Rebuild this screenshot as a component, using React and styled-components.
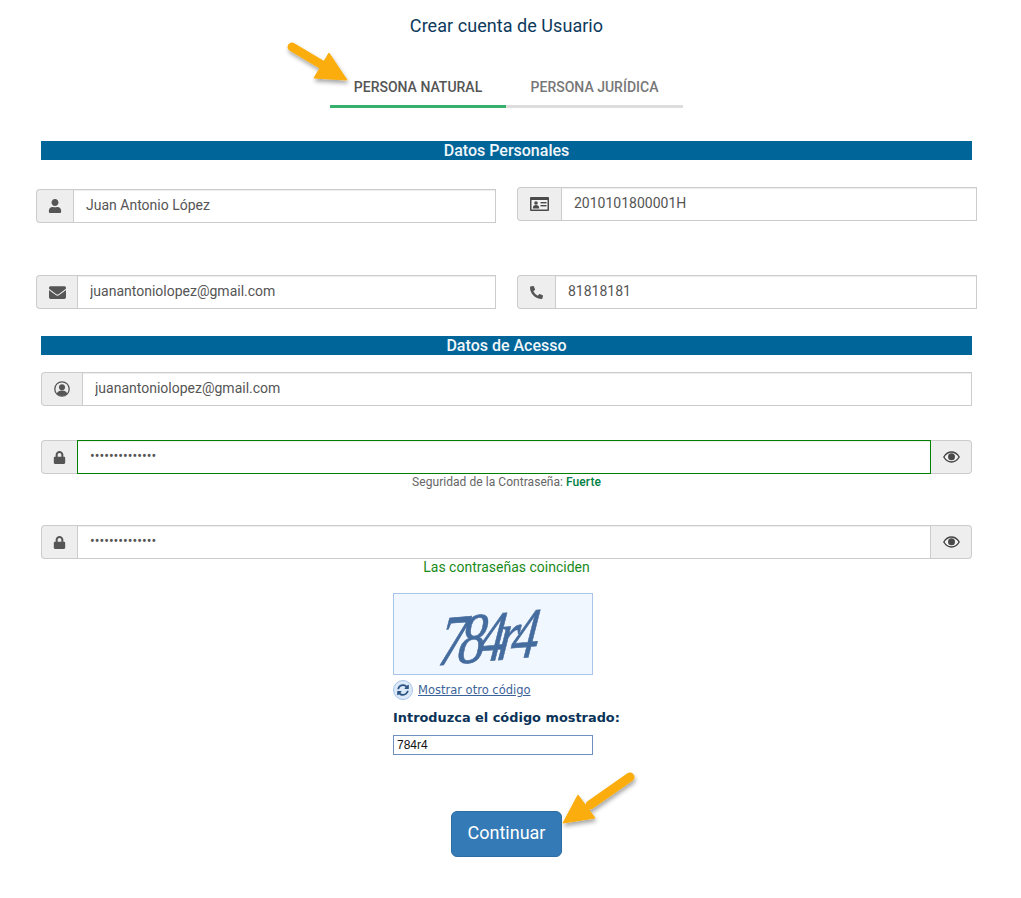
import styled, { createGlobalStyle } from "styled-components";
import { FaUser, FaEnvelope, FaPhoneAlt, FaLock, FaSyncAlt } from "react-icons/fa";

const GlobalStyle = createGlobalStyle`
  body {
    margin: 0;
    background: #fff;
    font-family: Roboto, "Liberation Sans", sans-serif;
  }
`;

const Page = styled.div`
  position: relative;
  width: 1021px;
  height: 898px;
  overflow: hidden;
`;

const Form = styled.form`
  display: flex;
  flex-direction: column;
  width: 931px;
  margin-left: 41px;
`;

const Title = styled.h1`
  margin: 14px 0 0;
  font-size: 18px;
  font-weight: 400;
  line-height: 24px;
  letter-spacing: 0.05px;
  text-align: center;
  color: #0d3a5c;
`;

const Tabs = styled.div`
  display: flex;
  align-self: center;
  margin-top: 28px;
`;

const Tab = styled.div`
  width: ${(p) => p.$width}px;
  height: 42px;
  box-sizing: border-box;
  padding-top: 13px;
  border-bottom: 3px solid ${(p) => (p.$active ? "#37b06b" : "#dddddd")};
  font-size: 14px;
  font-weight: 500;
  line-height: 16px;
  text-align: center;
  color: ${(p) => (p.$active ? "#555555" : "#777777")};
`;

const SectionBar = styled.h2`
  margin: ${(p) => p.$top}px 0 0;
  height: 19px;
  background: #006699;
  color: #f2f6f9;
  font-size: 16px;
  font-weight: 500;
  line-height: 20px;
  text-align: center;
`;

const Row = styled.div`
  display: grid;
  grid-template-columns: 460px 460px;
  column-gap: 21px;
  align-items: start;
  margin: ${(p) => p.$top}px -5px 0;
`;

const Field = styled.div`
  display: flex;
  height: 34px;
  margin-top: ${(p) => p.$top || 0}px;
`;

const Addon = styled.span`
  flex: none;
  display: flex;
  align-items: center;
  justify-content: center;
  box-sizing: border-box;
  width: ${(p) => p.$width}px;
  background: #eeeeee;
  border: 1px solid #cccccc;
  color: #555555;
  font-size: ${(p) => p.$size || 14}px;
  border-radius: ${(p) => (p.$right ? "0 4px 4px 0" : "4px 0 0 4px")};
  ${(p) => (p.$right ? "border-left: 0;" : "border-right: 0;")}
`;

const Input = styled.input`
  flex: 1;
  min-width: 0;
  box-sizing: border-box;
  height: 34px;
  padding: 0 12px 2px;
  background: #fff;
  border: 1px solid ${(p) => (p.$valid ? "#008000" : "#cccccc")};
  border-radius: 0;
  box-shadow: inset 0 1px 1px rgba(0, 0, 0, 0.075);
  color: #555555;
  font-family: Roboto, "Liberation Sans", sans-serif;
  font-size: 14px;
  outline: none;
`;

const Hint = styled.div`
  height: 16px;
  font-size: 12px;
  line-height: 16px;
  letter-spacing: 0.05px;
  text-align: center;
  color: #666666;
`;

const Strong = styled.span`
  font-weight: 500;
  color: #008044;
`;

const Match = styled.div`
  height: 16px;
  font-size: 14px;
  line-height: 16px;
  text-align: center;
  color: #1a8a1a;
`;

const CaptchaBlock = styled.div`
  align-self: center;
  width: 227px;
  margin-top: 18px;
`;

const CaptchaImage = styled.div`
  display: flex;
  align-items: center;
  justify-content: center;
  box-sizing: border-box;
  width: 200px;
  height: 82px;
  background: #f1f7fe;
  border: 1px solid #a9c5ea;
`;

const CaptchaText = styled.span`
  font-family: "Liberation Serif", serif;
  font-style: italic;
  font-size: 64px;
  line-height: 64px;
  letter-spacing: -9px;
  color: #456c9e;
  -webkit-text-stroke: 0.6px #456c9e;
  transform: translate(-7px, 4px) rotate(-5deg) skewX(-12deg) scale(0.86, 1.1);
`;

const Refresh = styled.div`
  display: flex;
  align-items: center;
  gap: 5px;
  height: 20px;
  margin-top: 5px;
`;

const RefreshIcon = styled.span`
  display: flex;
  align-items: center;
  justify-content: center;
  width: 20px;
  height: 20px;
  box-sizing: border-box;
  border: 1px solid #a9c5ea;
  border-radius: 50%;
  background: #dbe9f8;
  color: #2c5584;
  font-size: 12px;
`;

const RefreshLink = styled.a`
  font-family: "DejaVu Sans", sans-serif;
  font-size: 11.5px;
  color: #3b6399;
  text-decoration: underline;
`;

const CaptchaLabel = styled.label`
  display: block;
  margin-top: 9px;
  font-family: "DejaVu Sans", sans-serif;
  font-size: 12.9px;
  font-weight: 700;
  line-height: 17px;
  white-space: nowrap;
  color: #0b3358;
`;

const CaptchaInput = styled.input`
  display: block;
  box-sizing: border-box;
  width: 200px;
  height: 20px;
  margin-top: 9px;
  padding: 0 3px;
  border: 1px solid #6f8fc0;
  background: #fff;
  color: #111111;
  font-family: "Liberation Sans", sans-serif;
  font-size: 12px;
  outline: none;
`;

const Submit = styled.button`
  align-self: center;
  width: 111px;
  height: 46px;
  margin-top: 56px;
  padding: 0 0 3px;
  background: #337ab7;
  border: 1px solid #2e6da4;
  border-radius: 6px;
  color: #fff;
  font-family: Roboto, "Liberation Sans", sans-serif;
  font-size: 18px;
`;

const ArrowSvg = styled.svg`
  position: absolute;
  left: ${(p) => p.$left}px;
  top: ${(p) => p.$top}px;
  overflow: visible;
`;

// id card: dark frame with a light panel, a bust and two text lines
const IdCardIcon = () => (
  <svg width="19" height="14" viewBox="0 0 19 14">
    <rect width="19" height="14" rx="1" fill="#4a4a4a" />
    <rect x="1.5" y="3" width="16" height="9.5" fill="#f2f2f2" />
    <circle cx="6" cy="6" r="1.8" fill="#4a4a4a" />
    <path d="M2.8 11.5c0-2.4 1.3-3.4 3.2-3.4s3.2 1 3.2 3.4z" fill="#4a4a4a" />
    <rect x="10.5" y="5" width="6" height="1.4" fill="#4a4a4a" />
    <rect x="10.5" y="8" width="6" height="1.4" fill="#4a4a4a" />
  </svg>
);

const UserRingIcon = () => (
  <svg width="16" height="16" viewBox="0 0 16 16">
    <defs>
      <clipPath id="ring">
        <circle cx="8" cy="8" r="7" />
      </clipPath>
    </defs>
    <circle cx="8" cy="8" r="7.2" fill="none" stroke="#555" strokeWidth="1.3" />
    <g clipPath="url(#ring)" fill="#555">
      <circle cx="8" cy="6.2" r="3" />
      <ellipse cx="8" cy="14" rx="5.6" ry="4.6" />
    </g>
  </svg>
);

const EyeIcon = () => (
  <svg width="17" height="12" viewBox="0 0 17 12">
    <path
      d="M.8 6C2.7 2.9 5.4 1 8.5 1s5.800 1.900 7.700 5c-1.900 3.100-4.600 5-7.700 5S2.700 9.100.8 6z"
      fill="#f4f4f4"
      stroke="#444"
      strokeWidth="1.4"
    />
    <circle cx="8.500" cy="5.800" r="3.500" fill="#4a4a4a" />
  </svg>
);

// callout arrow, tail on x1/y1 and head drawn as a polygon
const Arrow = ({ left, top, width, height, line, head }) => (
  <ArrowSvg $left={left} $top={top} width={width} height={height}>
    <defs>
      <filter id={`shade${left}`} x="-20%" y="-20%" width="140%" height="140%">
        <feDropShadow dx="1" dy="3" stdDeviation="2" floodColor="#000" floodOpacity="0.35" />
      </filter>
    </defs>
    <g filter={`url(#shade${left})`} fill="#fbad0d" stroke="#fbad0d">
      <line {...line} strokeWidth="9" strokeLinecap="round" />
      <polygon points={head} strokeWidth="1" strokeLinejoin="round" />
    </g>
  </ArrowSvg>
);

export default function App() {
  return (
    <Page>
      <GlobalStyle />
      <Form onSubmit={(e) => e.preventDefault()}>
        <Title>Crear cuenta de Usuario</Title>
        <Tabs>
          <Tab $width={176} $active>PERSONA NATURAL</Tab>
          <Tab $width={177}>PERSONA JURÍDICA</Tab>
        </Tabs>

        <SectionBar $top={33}>Datos Personales</SectionBar>
        <Row $top={27}>
          <Field $top={2}>
            <Addon $width={37}><FaUser /></Addon>
            <Input readOnly value="Juan Antonio López" />
          </Field>
          <Field>
            <Addon $width={44}><IdCardIcon /></Addon>
            <Input readOnly value="2010101800001H" />
          </Field>
        </Row>
        <Row $top={52}>
          <Field>
            <Addon $width={41} $size={17}><FaEnvelope /></Addon>
            <Input readOnly value="juanantoniolopez@gmail.com" />
          </Field>
          <Field>
            <Addon $width={38} $size={13}><FaPhoneAlt /></Addon>
            <Input readOnly value="81818181" />
          </Field>
        </Row>

        <SectionBar $top={27}>Datos de Acesso</SectionBar>
        <Field $top={17}>
          <Addon $width={41}><UserRingIcon /></Addon>
          <Input readOnly value="juanantoniolopez@gmail.com" />
        </Field>
        <Field $top={34}>
          <Addon $width={36} $size={13}><FaLock /></Addon>
          <Input $valid readOnly type="password" value="juanantonio123" />
          <Addon $width={41} $right><EyeIcon /></Addon>
        </Field>
        <Hint>
          Seguridad de la Contraseña: <Strong>Fuerte</Strong>
        </Hint>
        <Field $top={35}>
          <Addon $width={36} $size={13}><FaLock /></Addon>
          <Input readOnly type="password" value="juanantonio123" />
          <Addon $width={41} $right><EyeIcon /></Addon>
        </Field>
        <Match>Las contraseñas coinciden</Match>

        <CaptchaBlock>
          <CaptchaImage>
            <CaptchaText>784r4</CaptchaText>
          </CaptchaImage>
          <Refresh>
            <RefreshIcon><FaSyncAlt /></RefreshIcon>
            <RefreshLink href="#">Mostrar otro código</RefreshLink>
          </Refresh>
          <CaptchaLabel>Introduzca el código mostrado:</CaptchaLabel>
          <CaptchaInput readOnly value="784r4" />
        </CaptchaBlock>

        <Submit type="submit">Continuar</Submit>
      </Form>

      <Arrow
        left={280}
        top={36}
        width={70}
        height={50}
        line={{ x1: 12, y1: 11, x2: 44, y2: 30 }}
        head="49,17 67,44 34,42"
      />
      <Arrow
        left={560}
        top={770}
        width={80}
        height={60}
        line={{ x1: 70, y1: 7, x2: 30, y2: 35 }}
        head="18,25 3,53 35,48"
      />
    </Page>
  );
}
